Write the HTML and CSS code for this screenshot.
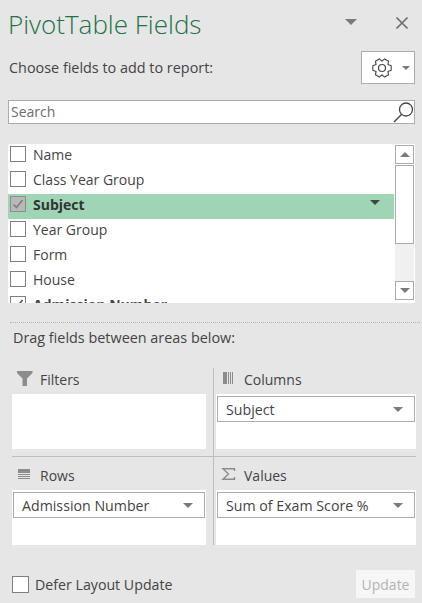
FILE: index.html
```html
<!DOCTYPE html>
<html lang="en">
<head>
  <meta charset="UTF-8">
  <title>PivotTable Fields</title>
  <link rel="stylesheet" href="styles.css">
</head>
<body>
  <div class="pane">
    <div class="title-row">
      <h1 class="title">PivotTable Fields</h1>
      <span class="arrow arrow-title"></span>
      <svg class="close" width="14" height="14" viewBox="0 0 14 14"><path d="M1.500 1.500l11 11M12.500 1.500l-11 11" stroke="#6e6e6e" stroke-width="1.700" fill="none"/></svg>
    </div>

    <div class="choose-row">
      <span class="choose-label">Choose fields to add to report:</span>
      <div class="gear-btn">
        <svg width="20" height="20" viewBox="0 0 20 20"><path d="M19.200 7.700V12.300L15.900 13.400 16.600 16.800 12.600 19.100 10 16.800 7.400 19.100 3.400 16.800 4.100 13.400 .8 12.300V7.700L4.100 6.600 3.400 3.200 7.400 .9 10 3.200 12.600 .9 16.600 3.200 15.900 6.600z" fill="none" stroke="#444" stroke-width="1.100" stroke-linejoin="round"/><circle cx="10" cy="10" r="3.500" fill="none" stroke="#444" stroke-width="1.200"/></svg>
        <span class="arrow arrow-small"></span>
      </div>
    </div>

    <div class="search">
      <span class="search-text">Search</span>
      <svg width="21" height="22" viewBox="0 0 21 22"><circle cx="13" cy="8.500" r="6.500" fill="none" stroke="#444" stroke-width="1.300"/><path d="M8.500 13.500L1 21" stroke="#444" stroke-width="1.500" fill="none"/></svg>
    </div>

    <div class="field-list">
      <ul class="fields">
        <li class="field"><span class="check"></span>Name</li>
        <li class="field"><span class="check"></span>Class Year Group</li>
        <li class="field field-on">
          <span class="check check-on"><svg width="14" height="14" viewBox="0 0 14 14"><path d="M2.500 7.500l3 3 6-7.500" stroke="#7f7f7f" stroke-width="1.600" fill="none"/></svg></span>
          <b>Subject</b>
          <span class="arrow arrow-dark"></span>
        </li>
        <li class="field"><span class="check"></span>Year Group</li>
        <li class="field"><span class="check"></span>Form</li>
        <li class="field"><span class="check"></span>House</li>
        <li class="field">
          <span class="check"><svg width="14" height="14" viewBox="0 0 14 14"><path d="M2.500 7.500l3 3 6-7.500" stroke="#555" stroke-width="1.600" fill="none"/></svg></span>
          <b>Admission Number</b>
        </li>
      </ul>
      <div class="scrollbar">
        <div class="scroll-btn"><span class="arrow arrow-up"></span></div>
        <div class="scroll-thumb"></div>
        <div class="scroll-track"></div>
        <div class="scroll-btn"><span class="arrow"></span></div>
      </div>
    </div>

    <div class="dots"></div>
    <p class="drag-label">Drag fields between areas below:</p>

    <div class="areas">
      <div class="area area-left area-top">
        <div class="area-head">
          <svg class="area-icon" width="16" height="15" viewBox="0 0 16 15"><path d="M0 0h15.500v2L10 7.500V15H5.500V7.500L0 2z" fill="#8c8c8c"/></svg>
          Filters
        </div>
        <div class="area-box"></div>
      </div>
      <div class="area area-right area-top">
        <div class="area-head">
          <svg class="area-icon" width="16" height="12" viewBox="0 0 16 12"><path d="M2 0h4v12H2zM7 0h1v12H7zM9 0h1v12H9zM11 0h1v12h-1z" fill="#8c8c8c"/></svg>
          Columns
        </div>
        <div class="area-box">
          <div class="pill"><span>Subject</span><span class="arrow"></span></div>
        </div>
      </div>
      <div class="area area-left area-bottom">
        <div class="area-head">
          <svg class="area-icon" width="16" height="10" viewBox="0 0 16 10"><path d="M1 0h12v4H1zM1 5h12v1H1zM1 7h12v1H1zM1 9h12v1H1z" fill="#8c8c8c"/></svg>
          Rows
        </div>
        <div class="area-box">
          <div class="pill"><span>Admission Number</span><span class="arrow"></span></div>
        </div>
      </div>
      <div class="area area-right area-bottom">
        <div class="area-head">
          <svg class="area-icon" width="16" height="12" viewBox="0 0 16 12"><path d="M13.500 3V.8H2l5.500 5.200L2 11.200h11.500V9" fill="none" stroke="#8c8c8c" stroke-width="1.400"/></svg>
          Values
        </div>
        <div class="area-box">
          <div class="pill"><span>Sum of Exam Score %</span><span class="arrow"></span></div>
        </div>
      </div>
    </div>

    <div class="footer">
      <span class="check check-defer"></span>
      <span class="defer-label">Defer Layout Update</span>
      <div class="update-btn">Update</div>
    </div>
  </div>
</body>
</html>
```

FILE: styles.css
```css
html, body {
  margin: 0;
  padding: 0;
}
body {
  font-family: 'Open Sans', 'Noto Sans', sans-serif;
  font-size: 14px;
  background-color: #e6e6e6;
  color: #444;
}
.pane {
  width: 422px;
  height: 603px;
  overflow: hidden;
  box-sizing: border-box;
  padding: 0 7px 0 8px;
}
.arrow {
  display: block;
  width: 0;
  height: 0;
  border-left: 5px solid transparent;
  border-right: 5px solid transparent;
  border-top: 5px solid #7a7a7a;
}
.arrow-up {
  border-top: 0;
  border-bottom: 5px solid #7a7a7a;
}
.arrow-small {
  border-left-width: 4px;
  border-right-width: 4px;
  border-top-width: 4px;
}
.arrow-dark {
  margin-left: auto;
  margin-right: 14px;
  margin-top: -4px;
  border-top-color: #444;
}

/* top */
.title-row {
  display: flex;
  align-items: center;
  height: 51px;
}
.title {
  margin: 0;
  padding-bottom: 2px;
  font-size: 26px;
  font-weight: 300;
  line-height: 49px;
  color: #217346;
}
.arrow-title {
  margin-left: auto;
  margin-right: 38px;
  margin-top: -7px;
  border-left-width: 6px;
  border-right-width: 6px;
  border-top-width: 6px;
}
.close {
  margin-right: 6px;
  margin-top: -6px;
}
.choose-row {
  display: flex;
  align-items: center;
  justify-content: space-between;
  height: 33px;
}
.choose-label {
  margin-left: 1px;
  font-size: 14.4px;
}
.gear-btn {
  display: flex;
  align-items: center;
  gap: 10px;
  box-sizing: border-box;
  width: 54px;
  height: 33px;
  padding-left: 10px;
  background-color: #fff;
  border: 1px solid #ababab;
}
.search {
  display: flex;
  align-items: center;
  justify-content: space-between;
  box-sizing: border-box;
  height: 24px;
  margin-top: 16px;
  padding-left: 2px;
  background-color: #fff;
  border: 1px solid #ababab;
}
.search-text {
  margin-top: -2px;
  color: #6d6d6d;
}

/* field list */
.field-list {
  display: flex;
  height: 159px;
  margin-top: 20px;
  overflow: hidden;
  background-color: #fff;
}
.fields {
  flex: 1;
  margin: 0;
  padding: 0;
  list-style: none;
}
.field {
  display: flex;
  align-items: center;
  box-sizing: border-box;
  height: 25px;
  padding: 0 0 5px 2px;
}
.field-on {
  background-color: #9fd5b5;
  color: #333;
}
.check {
  display: flex;
  align-items: center;
  justify-content: center;
  flex: none;
  box-sizing: border-box;
  width: 16px;
  height: 16px;
  margin-right: 7px;
  background-color: #fff;
  border: 1px solid #7f7f7f;
}
.check-on {
  background-color: #b9b9b9;
  border-color: #8c8c8c;
}
.scrollbar {
  display: flex;
  flex-direction: column;
  width: 19px;
  margin: 1px 1px 3px 1px;
}
.scroll-btn {
  display: flex;
  align-items: center;
  justify-content: center;
  flex: none;
  box-sizing: border-box;
  height: 19px;
  border: 1px solid #ababab;
}
.scroll-thumb {
  flex: none;
  box-sizing: border-box;
  height: 79px;
  margin-top: 1px;
  border: 1px solid #ababab;
}
.scroll-track {
  flex: 1;
  background-color: #f0f0f0;
}

/* areas */
.dots {
  margin: 19px -5px 0 2px;
  border-top: 1px dotted #b5b5b5;
}
.drag-label {
  margin: 5px 0 0 5px;
  font-size: 14.4px;
  line-height: 20px;
}
.areas {
  display: grid;
  grid-template-columns: 202px 202px;
  margin: 20px 0 0 4px;
}
.area-left {
  padding-right: 7px;
  border-right: 1px solid #bdbdbd;
}
.area-right {
  padding-left: 2px;
}
.area-top {
  height: 88px;
  border-bottom: 1px solid #bdbdbd;
}
.area-bottom {
  padding-top: 7px;
}
.area-head {
  display: flex;
  align-items: center;
  box-sizing: border-box;
  height: 26px;
  padding-bottom: 4px;
}
.area-icon {
  width: 16px;
  margin: -2px 7px 0 5px;
}
.area-box {
  box-sizing: border-box;
  height: 55px;
  padding: 2px 1px;
  background-color: #fff;
}
.pill {
  display: flex;
  align-items: center;
  justify-content: space-between;
  box-sizing: border-box;
  height: 26px;
  padding: 0 11px 0 8px;
  font-size: 14.2px;
  background-color: #fff;
  border: 1px solid #ababab;
}

/* bottom */
.footer {
  display: flex;
  align-items: center;
  margin: 25px 0 0 4px;
}
.check-defer {
  width: 17px;
  height: 17px;
  margin-right: 6px;
}
.defer-label {
  font-size: 14.2px;
}
.update-btn {
  display: flex;
  align-items: center;
  justify-content: center;
  width: 59px;
  height: 28px;
  margin-left: auto;
  background-color: #f6f6f6;
  color: #b4b4b4;
}
```
